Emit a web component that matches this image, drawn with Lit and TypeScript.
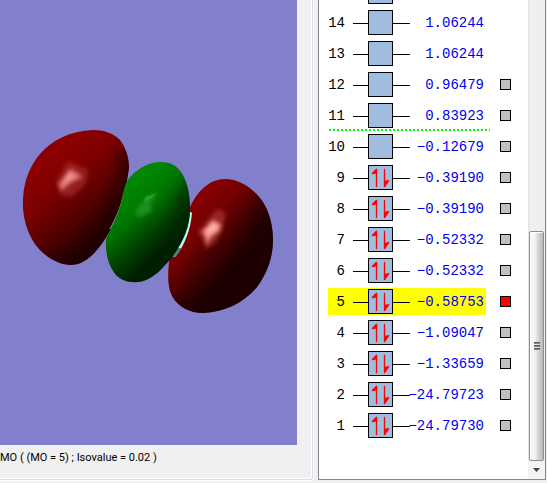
import { LitElement, html, css, svg, nothing } from "lit";
import { customElement, property, state } from "lit/decorators.js";
import { classMap } from "lit/directives/class-map.js";

interface Orbital {
  n: number;
  energy: string;
  electrons: number;
  pickable: boolean;
}

const ORBITALS: Orbital[] = [
  { n: 15, energy: "", electrons: 0, pickable: false },
  { n: 14, energy: "1.06244", electrons: 0, pickable: false },
  { n: 13, energy: "1.06244", electrons: 0, pickable: false },
  { n: 12, energy: "0.96479", electrons: 0, pickable: true },
  { n: 11, energy: "0.83923", electrons: 0, pickable: true },
  { n: 10, energy: "−0.12679", electrons: 0, pickable: true },
  { n: 9, energy: "−0.39190", electrons: 2, pickable: true },
  { n: 8, energy: "−0.39190", electrons: 2, pickable: true },
  { n: 7, energy: "−0.52332", electrons: 2, pickable: true },
  { n: 6, energy: "−0.52332", electrons: 2, pickable: true },
  { n: 5, energy: "−0.58753", electrons: 2, pickable: true },
  { n: 4, energy: "−1.09047", electrons: 2, pickable: true },
  { n: 3, energy: "−1.33659", electrons: 2, pickable: true },
  { n: 2, energy: "−24.79723", electrons: 2, pickable: true },
  { n: 1, energy: "−24.79730", electrons: 2, pickable: true },
];

const LEFT_LOBE =
  "M93 130C104 130 113 133 120 140C126 148 129 158 129 168C127 182 124 198 119 210C114 224 106 240 96 251C88 260 80 265 70 265C55 264 41 254 33 241C26 229 22 214 23 199C24 180 30 166 40 154C52 140 70 131 93 130Z";
const CENTRE_LOBE =
  "M161 162C170 162 176 165 181 172C187 181 190 192 190 210C190 225 184 241 173 256C164 267 156 276 146 280C136 284 123 283 115 274C108 265 105 252 106 239C113 225 119 213 122 199C124 188 126 181 131 176C139 168 149 162 161 162Z";
const RIGHT_LOBE =
  "M225 179C241 179 255 190 263 202C270 213 273 227 273 240C273 257 267 274 257 287C244 302 226 312 203 313C190 313 178 307 172 296C167 286 168 274 169 261L190 207C198 190 210 179 225 179Z";

@customElement("orbital-view")
export class OrbitalView extends LitElement {
  static styles = css`
    :host { display: flex; background: #8280cc; overflow: hidden; min-height: 0; }
    svg { width: 100%; height: 100%; display: block; }
  `;

  render() {
    return html`<svg viewBox="0 0 297 445" role="img" aria-label="Molecular orbital surface">
      ${svg`
      <defs>
        <linearGradient id="redL" gradientUnits="userSpaceOnUse" x1="52" y1="157" x2="114" y2="234">
          <stop offset="0" stop-color="#8c0000"/><stop offset=".3" stop-color="#7c0000"/>
          <stop offset=".65" stop-color="#500000"/><stop offset="1" stop-color="#200000"/>
        </linearGradient>
        <linearGradient id="green" gradientUnits="userSpaceOnUse" x1="126" y1="190" x2="174" y2="246">
          <stop offset="0" stop-color="#008800"/><stop offset=".35" stop-color="#007400"/>
          <stop offset=".65" stop-color="#004600"/><stop offset="1" stop-color="#002000"/>
        </linearGradient>
        <linearGradient id="redR" gradientUnits="userSpaceOnUse" x1="188" y1="210" x2="242" y2="257">
          <stop offset="0" stop-color="#880000"/><stop offset=".35" stop-color="#740000"/>
          <stop offset=".65" stop-color="#480000"/><stop offset="1" stop-color="#200000"/>
        </linearGradient>
        <filter id="soft" x="-50%" y="-50%" width="200%" height="200%"><feGaussianBlur stdDeviation="2"/></filter>
        <filter id="wide" x="-50%" y="-50%" width="200%" height="200%"><feGaussianBlur stdDeviation="7"/></filter>
        <clipPath id="cl"><path d=${LEFT_LOBE}/></clipPath>
        <clipPath id="cc"><path d=${CENTRE_LOBE}/></clipPath>
        <clipPath id="cr"><path d=${RIGHT_LOBE}/></clipPath>
      </defs>
      <path d=${LEFT_LOBE} fill="url(#redL)"/>
      <g clip-path="url(#cl)">
        <path d="M122 140L135 165L122 225L86 268L40 262L78 252L103 220L118 183Z" fill="#1c0000" opacity=".75" filter="url(#wide)"/>
        <path d="M68 161L88 170L86 184L72 197L61 195L56 182Z" fill="#b83c3c" opacity=".5" filter="url(#soft)"/>
        <path d="M70 169L77 173L82 177L70 183L61 191L59 183L65 178Z" fill="#f08c8c" opacity=".85" filter="url(#soft)"/>
        <path d="M70 171L73 177L66 182L63 179Z" fill="#ffb6b0" opacity=".5" filter="url(#soft)"/>
      </g>
      <path d=${RIGHT_LOBE} fill="url(#redR)"/>
      <g clip-path="url(#cr)">
        <path d="M265 200L280 240L255 300L200 320L165 300L195 302L225 275L250 235Z" fill="#1c0000" opacity=".75" filter="url(#wide)"/>
        <path d="M217 209L226 213L222 230L216 242L206 249L202 237L198 232Z" fill="#b83c3c" opacity=".6" filter="url(#soft)"/>
        <path d="M213 220L221 225L218 232L211 236L207 245L205 234L201 232L207 229Z" fill="#ffa098" filter="url(#soft)"/>
        <path d="M212 223L216 229L207 232L204 231Z" fill="#ffc4bc" opacity=".7" filter="url(#soft)"/>
      </g>
      <path d="M189 211L192 213C191 229 184 247 175 257L171 257C180 244 186 232 189 211Z" fill="#b8f8f4"/>
      <path d="M177 248L182 248L175 257L171 257Z" fill="#547c7c"/>
      <path d="M123 196C121 207 116 218 110 229" fill="none" stroke="#8aa8a8"/>
      <path d=${CENTRE_LOBE} fill="url(#green)"/>
      <g clip-path="url(#cc)">
        <path d="M184 175L196 210L182 245L150 286L120 285L145 260L175 220Z" fill="#001c00" opacity=".65" filter="url(#wide)"/>
        <path d="M146 197L157 193L151 203L152 212L139 217L134 213Z" fill="#249824" opacity=".8" filter="url(#soft)"/>
        <path d="M145 197L157 193L152 198L144 202Z" fill="#38a838" opacity=".6"/>
      </g>`}
    </svg>`;
  }
}

/** One energy level: number, box with its electrons, energy and tick box. */
@customElement("orbital-row")
export class OrbitalRow extends LitElement {
  @property({ attribute: false }) orbital!: Orbital;
  @property({ type: Boolean }) selected = false;
  @property({ type: Boolean }) divider = false;

  static styles = css`
    :host { display: flex; align-items: center; flex: none; height: 31px; position: relative; }
    .level {
      display: flex; align-items: center; flex: none; width: 158px; height: 27px;
      margin: 0; padding: 0; border: 0; background: none; cursor: pointer;
      font: 14px/25px "Liberation Mono", monospace; color: #0000f0; text-align: right;
    }
    .level.selected { background: #ff0; }
    .num, .energy { padding-top: 2px; white-space: nowrap; }
    .num { width: 17px; color: #000; }
    .shape { width: 57px; height: 25px; margin-left: 8px; flex: none; }
    .energy { width: 74px; display: flex; justify-content: flex-end; }
    .pick {
      appearance: none; width: 11px; height: 11px; margin: 0 0 0 14px; box-sizing: border-box;
      border: 1px solid #000; background: #c0c0c0; border-radius: 0;
    }
    .pick:checked { background: #f00; }
    .divider {
      position: absolute; left: 1px; bottom: 0; width: 161px; height: 2px;
      background: repeating-linear-gradient(to right, #0f0 0 2px, transparent 2px 4px);
    }
  `;

  private pick() {
    this.dispatchEvent(new CustomEvent("pick", { detail: this.orbital.n }));
  }

  render() {
    const o = this.orbital;
    return html`
      <button class=${classMap({ level: true, selected: this.selected })} aria-label="Level ${o.n}" @click=${this.pick}>
        <span class="num">${o.energy ? o.n : nothing}</span>
        <svg class="shape" viewBox="0 0 57 25" aria-hidden="true">
          <path d="M0 13.5H57" stroke="#000"/>
          <rect x="15.5" y=".5" width="24" height="24" fill="#a0bddf" stroke="#000"/>
          ${o.electrons
            ? svg`<path d="M23 22V4H24V22ZM19 9V8L23 4H24V8L21 9ZM31 4H32V16L36 15V16L32 22H31Z" fill="#f00" stroke="#f00" stroke-width=".3"/>`
            : nothing}
        </svg>
        <span class="energy">${o.energy}</span>
      </button>
      ${o.pickable
        ? html`<input class="pick" type="checkbox" aria-label="Orbital ${o.n}" .checked=${this.selected} @change=${this.pick} />`
        : nothing}
      ${this.divider ? html`<span class="divider"></span>` : nothing}
    `;
  }
}

@customElement("app-root")
export class AppRoot extends LitElement {
  @state() private selected = 5;

  static styles = css`
    :host {
      display: flex; gap: 5px; height: 100vh; box-sizing: border-box;
      padding: 0 1px 3px 0; background: #f0f0f0; overflow: hidden;
    }
    .viewer {
      flex: 1; min-width: 0; display: flex; flex-direction: column; box-sizing: border-box;
      padding-right: 15px; border: 1px solid #d5dfe5; border-width: 0 1px 1px 0;
      border-radius: 0 0 3px 0; box-shadow: 1px 1px #fff, inset -1px -1px #fff;
    }
    orbital-view { flex: 1; }
    .status {
      flex: none; height: 34px; box-sizing: border-box; padding-top: 5px; white-space: nowrap;
      font: 11px/16px Roboto, "Liberation Sans", sans-serif; color: #000;
    }
    .panel {
      flex: none; width: 228px; box-sizing: border-box; display: flex;
      border: 1px solid #828790; border-top: 0; background: #fff;
    }
    .levels {
      flex: 1; min-width: 0; display: flex; flex-direction: column; justify-content: flex-end;
      overflow: hidden; padding: 0 0 38px 9px;
    }
    .scroll {
      flex: none; width: 17px; display: flex; flex-direction: column;
      background: linear-gradient(to right, #e3e3e3, #f0f0f0 3px, #eee);
    }
    .space { flex: 232; }
    .thumb {
      flex: 229; box-sizing: border-box; margin: 0 1px; display: flex; flex-direction: column;
      align-items: center; justify-content: center; gap: 1px;
      border: 1px solid #8f8f8f; border-radius: 2px; box-shadow: inset 1px 1px #fff;
      background: linear-gradient(to right, #f5f5f5 0 35%, #d8d8dc 60%, #b8b8bc);
    }
    .grip { width: 6px; height: 2px; background: linear-gradient(#444, #999); }
    .down {
      flex: none; height: 18px; padding: 0; border: 0; background: #f3f3f3;
      display: flex; align-items: center; justify-content: center;
    }
  `;

  render() {
    return html`
      <section class="viewer">
        <orbital-view></orbital-view>
        <div class="status">MO ( (MO = ${this.selected}) ; Isovalue = 0.02 )</div>
      </section>
      <section class="panel">
        <div class="levels">
          ${ORBITALS.map(
            (o) => html`<orbital-row
              .orbital=${o}
              .selected=${o.n === this.selected}
              .divider=${o.n === 11}
              @pick=${(e: CustomEvent<number>) => (this.selected = e.detail)}
            ></orbital-row>`
          )}
        </div>
        <div class="scroll">
          <div class="space"></div>
          <div class="thumb"><i class="grip"></i><i class="grip"></i><i class="grip"></i></div>
          <button class="down" aria-label="Scroll down">
            <svg width="7" height="4" viewBox="0 0 7 4"><path d="M0 0H7L3.5 4Z" fill="#444"/></svg>
          </button>
        </div>
      </section>
    `;
  }
}
